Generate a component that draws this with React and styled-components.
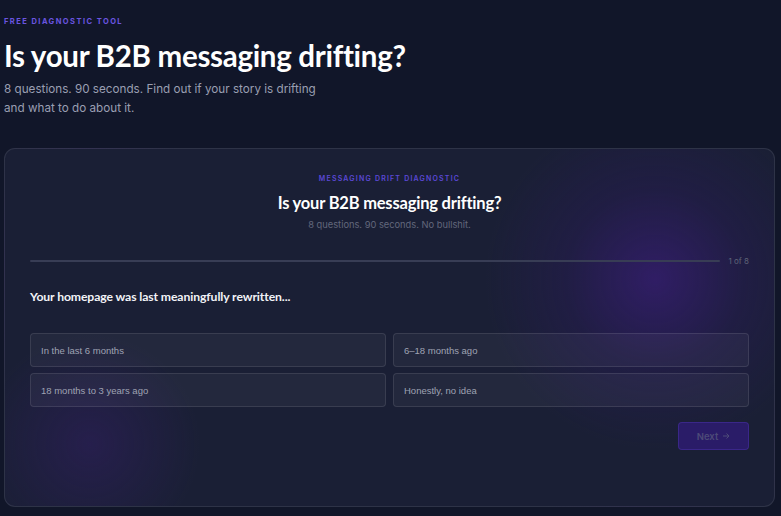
import React, { useState } from "react";
import styled, { createGlobalStyle } from "styled-components";

const Global = createGlobalStyle`
  html, body { margin: 0; padding: 0; background: #111629; }
  body { font-family: Inter, "Noto Sans", sans-serif; -webkit-font-smoothing: antialiased; }
  * { box-sizing: border-box; }
`;

const Page = styled.div`
  width: 781px;
  height: 516px;
  background: #111629;
  padding: 15px 6px 0 4px;
  display: flex;
  flex-direction: column;
  overflow: hidden;
`;

const Eyebrow = styled.div`
  font-family: Inter, sans-serif;
  font-size: 7.5px;
  font-weight: 700;
  letter-spacing: 1.45px;
  color: #6a55e0;
  text-transform: uppercase;
  line-height: 12px;
  margin-top: 1px;
`;

const Hero = styled.h1`
  margin: 10px 0 0;
  font-family: Lato, sans-serif;
  font-weight: 700;
  font-size: 29.5px;
  letter-spacing: -0.3px;
  line-height: 36px;
  color: #ffffff;
`;

const Lead = styled.p`
  margin: 6px 0 0;
  width: 330px;
  font-size: 11.7px;
  line-height: 19px;
  color: #9a9fb2;
`;

const Card = styled.div`
  position: relative;
  flex-shrink: 0;
  margin-top: 30px;
  height: 359px;
  border-radius: 11px;
  border: 1px solid rgba(255, 255, 255, 0.09);
  background:
    radial-gradient(circle at 650px 130px, rgba(66, 28, 140, 0.55) 0, rgba(50, 24, 110, 0.25) 90px, rgba(26, 31, 53, 0) 170px),
    radial-gradient(circle at 85px 295px, rgba(60, 30, 120, 0.35) 0, rgba(26, 31, 53, 0) 110px),
    #1a1f35;
  padding: 25px 25px 0 25px;
  display: flex;
  flex-direction: column;
  overflow: hidden;
`;

const Header = styled.div`
  display: flex;
  flex-direction: column;
  align-items: center;
`;

const CardEyebrow = styled.div`
  font-size: 7px;
  font-weight: 600;
  letter-spacing: 1.2px;
  color: #5b48d6;
  text-transform: uppercase;
  line-height: 10px;
`;

const CardTitle = styled.h2`
  margin: 9px 0 0;
  font-family: Lato, sans-serif;
  font-weight: 700;
  font-size: 16.5px;
  letter-spacing: -0.2px;
  line-height: 20px;
  color: #ffffff;
`;

const CardSub = styled.div`
  margin-top: 6px;
  font-size: 9.3px;
  color: #62677c;
  line-height: 12px;
`;

const ProgressRow = styled.div`
  margin-top: 25px;
  display: flex;
  align-items: center;
  gap: 9px;
`;

const Track = styled.div`
  flex: 1;
  height: 2px;
  border-radius: 1px;
  background: #383d55;
  overflow: hidden;
`;

const Fill = styled.div`
  height: 100%;
  background: #6a55e0;
`;

const Count = styled.div`
  font-size: 8px;
  color: #5f6478;
  line-height: 10px;
`;

const Question = styled.div`
  margin-top: 24px;
  font-family: Lato, sans-serif;
  font-weight: 700;
  font-size: 12.2px;
  letter-spacing: -0.1px;
  color: #f2f3f7;
  line-height: 14px;
`;

const Options = styled.div`
  margin-top: 29px;
  display: grid;
  grid-template-columns: 1fr 1fr;
  gap: 6px 7px;
`;

const Option = styled.button`
  height: 34px;
  padding: 0 10px;
  text-align: left;
  border-radius: 4px;
  border: 1px solid ${(p) => (p.$active ? "#6a55e0" : "rgba(255,255,255,0.1)")};
  background: rgba(255, 255, 255, 0.045);
  font-family: "Liberation Sans", Arial, sans-serif;
  font-size: 9.5px;
  color: #9fa3b3;
  cursor: pointer;
`;

const Footer = styled.div`
  margin-top: 15px;
  display: flex;
  justify-content: flex-end;
`;

const Next = styled.button`
  width: 71px;
  height: 28px;
  border-radius: 4px;
  border: 1px solid rgba(90, 60, 200, 0.35);
  background: #2a1c68;
  color: #4d4a78;
  font-family: Inter, sans-serif;
  font-weight: 600;
  font-size: 9.5px;
  display: flex;
  align-items: center;
  justify-content: center;
  gap: 4px;
`;

const options = [
  "In the last 6 months",
  "6–18 months ago",
  "18 months to 3 years ago",
  "Honestly, no idea",
];

export default function App() {
  const [sel, setSel] = useState(null);
  return (
    <>
      <Global />
      <Page>
        <Eyebrow>Free Diagnostic Tool</Eyebrow>
        <Hero>Is your B2B messaging drifting?</Hero>
        <Lead>8 questions. 90 seconds. Find out if your story is drifting and what to do about it.</Lead>
        <Card>
          <Header>
            <CardEyebrow>Messaging Drift Diagnostic</CardEyebrow>
            <CardTitle>Is your B2B messaging drifting?</CardTitle>
            <CardSub>8 questions. 90 seconds. No bullshit.</CardSub>
          </Header>
          <ProgressRow>
            <Track>
              <Fill style={{ width: "0%" }} />
            </Track>
            <Count>1 of 8</Count>
          </ProgressRow>
          <Question>Your homepage was last meaningfully rewritten...</Question>
          <Options>
            {options.map((o, i) => (
              <Option key={o} $active={sel === i} onClick={() => setSel(i)}>
                {o}
              </Option>
            ))}
          </Options>
          <Footer>
            <Next disabled={sel === null}>
              Next
              <svg width="8" height="8" viewBox="0 0 8 8" fill="none" stroke="currentColor" strokeWidth="1">
                <path d="M1 4h6M4.5 1.5L7 4 4.5 6.5" />
              </svg>
            </Next>
          </Footer>
        </Card>
      </Page>
    </>
  );
}
